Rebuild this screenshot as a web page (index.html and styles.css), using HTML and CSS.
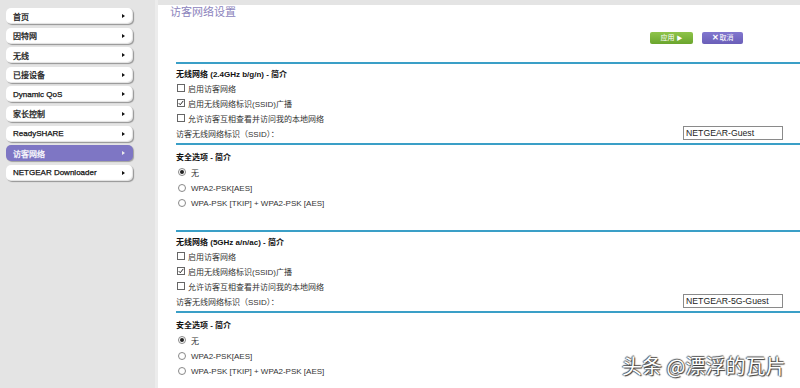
FILE: index.html
```html
<!DOCTYPE html>
<html lang="zh-CN">
<head>
<meta charset="utf-8">
<title>访客网络设置</title>
<link rel="stylesheet" href="styles.css">
</head>
<body>
<div class="page">
  <aside class="sidebar">
    <ul class="nav">
      <li class="nav-item"><span>首页</span><i class="arrow"></i></li>
      <li class="nav-item"><span>因特网</span><i class="arrow"></i></li>
      <li class="nav-item"><span>无线</span><i class="arrow"></i></li>
      <li class="nav-item"><span>已接设备</span><i class="arrow"></i></li>
      <li class="nav-item"><span>Dynamic QoS</span><i class="arrow"></i></li>
      <li class="nav-item"><span>家长控制</span><i class="arrow"></i></li>
      <li class="nav-item"><span>ReadySHARE</span><i class="arrow"></i></li>
      <li class="nav-item active"><span>访客网络</span><i class="arrow"></i></li>
      <li class="nav-item"><span>NETGEAR Downloader</span><i class="arrow"></i></li>
    </ul>
  </aside>
  <main class="main">
    <h1 class="title">访客网络设置</h1>
    <div class="actions">
      <button class="btn btn-apply">应用 <span class="tri">▶</span></button>
      <button class="btn btn-cancel"><span class="x">✕</span>取消</button>
    </div>
    <div class="form">
      <div class="rule"></div>
      <div class="head first">无线网络 (2.4GHz b/g/n) - 简介</div>
      <div class="row h14"><span class="cb"></span>启用访客网络</div>
      <div class="row h16"><span class="cb checked"><svg viewBox="0 0 8 8" width="6" height="6"><path d="M1 4.2 L3 6.3 L7 1.2" fill="none" stroke="#222" stroke-width="1.3"/></svg></span>启用无线网络标识(SSID)广播</div>
      <div class="row h14"><span class="cb"></span>允许访客互相查看并访问我的本地网络</div>
      <div class="row ssid"><span>访客无线网络标识（SSID）：</span><span class="input">NETGEAR-Guest</span></div>
      <div class="rule after-ssid"></div>
      <div class="head sec">安全选项 - 简介</div>
      <div class="row h16"><span class="rb on"></span>无</div>
      <div class="row h16"><span class="rb"></span>WPA2-PSK[AES]</div>
      <div class="row h14"><span class="rb"></span>WPA-PSK [TKIP] + WPA2-PSK [AES]</div>

      <div class="rule next"></div>
      <div class="head first">无线网络 (5GHz a/n/ac) - 简介</div>
      <div class="row h14"><span class="cb"></span>启用访客网络</div>
      <div class="row h16"><span class="cb checked"><svg viewBox="0 0 8 8" width="6" height="6"><path d="M1 4.2 L3 6.3 L7 1.2" fill="none" stroke="#222" stroke-width="1.3"/></svg></span>启用无线网络标识(SSID)广播</div>
      <div class="row h14"><span class="cb"></span>允许访客互相查看并访问我的本地网络</div>
      <div class="row ssid"><span>访客无线网络标识（SSID）：</span><span class="input">NETGEAR-5G-Guest</span></div>
      <div class="rule after-ssid"></div>
      <div class="head sec">安全选项 - 简介</div>
      <div class="row h16"><span class="rb on"></span>无</div>
      <div class="row h16"><span class="rb"></span>WPA2-PSK[AES]</div>
      <div class="row h14"><span class="rb"></span>WPA-PSK [TKIP] + WPA2-PSK [AES]</div>
    </div>
  </main>
</div>
<div class="watermark">头条 @漂浮的瓦片</div>
</body>
</html>
```
FILE: styles.css
```css
html, body {
  margin: 0;
  padding: 0;
}
body {
  width: 800px;
  height: 388px;
  overflow: hidden;
  position: relative;
  background: #fff;
  font-family: "Liberation Sans", "Noto Sans CJK SC", sans-serif;
  font-size: 8px;
  color: #222;
}
.page {
  display: flex;
  height: 388px;
}
.sidebar {
  box-sizing: border-box;
  width: 158px;
  background: #e4e4e4;
  border-right: 3px solid #ececec;
  padding: 8px 0 0 6px;
}
.nav {
  list-style: none;
  margin: 0;
  padding: 0;
  display: flex;
  flex-direction: column;
  gap: 3.6px;
}
.nav-item {
  box-sizing: border-box;
  width: 127px;
  height: 16px;
  background: #fff;
  border-radius: 5px;
  box-shadow: 1px 1px 1px rgba(0,0,0,0.35), inset -1px -1px 1px rgba(0,0,0,0.12);
  display: flex;
  align-items: center;
  justify-content: space-between;
  padding: 0 8px 0 7px;
  font-size: 8px;
  color: #111;
  font-weight: normal;
  -webkit-text-stroke: 0.25px #111;
}
.nav-item .arrow {
  width: 0;
  height: 0;
  border-top: 2.5px solid transparent;
  border-bottom: 2.5px solid transparent;
  border-left: 3.5px solid #111;
}
.nav-item.active {
  background: #7e76c4;
  color: #fff;
  -webkit-text-stroke: 0.25px #fff;
  box-shadow: 1px 1px 1px rgba(0,0,0,0.3);
}
.nav-item.active .arrow {
  border-left-color: #eee;
}
.main {
  flex: 1;
  border-top: 5px solid #e4e4e4;
  padding-left: 12px;
}
.title {
  margin: 1px 0 0 0;
  font-size: 11px;
  line-height: 13px;
  font-weight: normal;
  color: #8c84bd;
}
.actions {
  display: flex;
  justify-content: flex-end;
  gap: 9px;
  margin-top: 13px;
  padding-right: 57px;
  height: 12px;
}
.btn {
  border: 0;
  padding: 0;
  height: 12px;
  border-radius: 2px;
  color: #fff;
  font-family: "Liberation Sans", "Noto Sans CJK SC", sans-serif;
  font-size: 7px;
  line-height: 12px;
  display: flex;
  align-items: center;
  justify-content: center;
}
.btn-apply {
  width: 43px;
  background: linear-gradient(#8fc44a, #6aa52d);
  gap: 2px;
}
.btn-apply .tri {
  font-size: 6px;
}
.btn-cancel {
  width: 41px;
  background: linear-gradient(#8277cf, #6a5eb8);
}
.btn-cancel .x {
  font-weight: bold;
  font-size: 8px;
  margin-right: 1px;
}
.form {
  margin-left: 6px;
  margin-top: 18px;
}
.rule {
  height: 2px;
  background: #3a9fc7;
}
.rule.after-ssid {
  margin-top: 2px;
}
.rule.next {
  margin-top: 20px;
}
.head {
  height: 12px;
  line-height: 12px;
  font-weight: bold;
  color: #111;
}
.head.first {
  margin-top: 5px;
}
.head.sec {
  margin-top: 7px;
}
.row {
  display: flex;
  align-items: center;
  color: #333;
}
.h14 { height: 14px; }
.h16 { height: 16px; }
.ssid {
  height: 16px;
  justify-content: space-between;
  padding-right: 17px;
}
.input {
  box-sizing: border-box;
  width: 100px;
  height: 14px;
  border: 1px solid #8a8a8a;
  background: #fff;
  font-size: 8.7px;
  line-height: 12px;
  padding-left: 2px;
  color: #222;
}
.cb {
  box-sizing: border-box;
  width: 8px;
  height: 8px;
  border: 1px solid #666;
  background: #fff;
  margin: 0 3px 0 1px;
  display: flex;
  align-items: center;
  justify-content: center;
}
.rb {
  box-sizing: border-box;
  width: 8px;
  height: 8px;
  border: 1px solid #888;
  border-radius: 50%;
  background: #fff;
  margin: 0 5px 0 2px;
  display: flex;
  align-items: center;
  justify-content: center;
}
.rb.on::after {
  content: "";
  width: 4px;
  height: 4px;
  border-radius: 50%;
  background: #222;
}
.watermark {
  position: absolute;
  left: 622px;
  top: 354px;
  font-size: 20px;
  line-height: 24px;
  color: #fff;
  font-family: "Noto Sans CJK SC", sans-serif;
  text-shadow: 1px 1px 1px #333, -1px 0 1px #555, 0 -1px 1px #555;
  white-space: nowrap;
}
```
